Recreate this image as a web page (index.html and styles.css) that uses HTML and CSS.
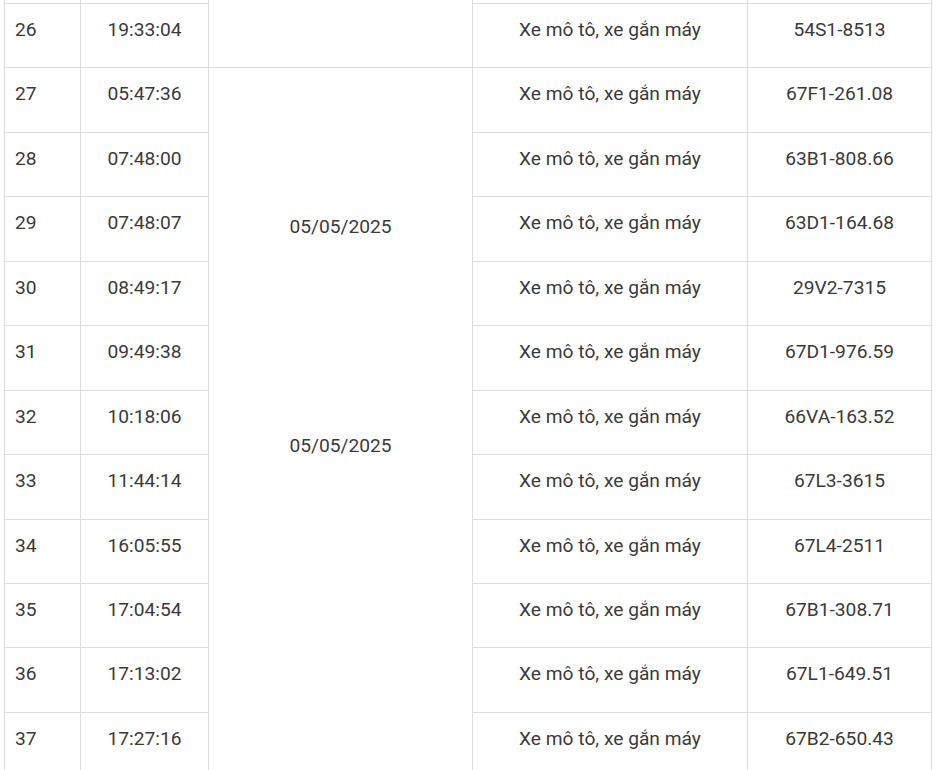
FILE: index.html
```html
<!DOCTYPE html>
<html lang="vi">
<head>
<meta charset="utf-8">
<link rel="stylesheet" href="styles.css">
</head>
<body>
<table class="tbl">
  <colgroup>
    <col class="c-no"><col class="c-time"><col class="c-date"><col class="c-type"><col class="c-plate">
  </colgroup>
  <tbody>
    <tr class="stub">
      <td></td><td></td><td class="date-open" rowspan="2"></td><td></td><td></td>
    </tr>
    <tr>
      <td class="no">26</td><td class="ctr">19:33:04</td><td class="ctr">Xe mô tô, xe gắn máy</td><td class="ctr">54S1-8513</td>
    </tr>
    <tr>
      <td class="no">27</td><td class="ctr">05:47:36</td>
      <td class="date date-a" rowspan="5">05/05/2025</td>
      <td class="ctr">Xe mô tô, xe gắn máy</td><td class="ctr">67F1-261.08</td>
    </tr>
    <tr><td class="no">28</td><td class="ctr">07:48:00</td><td class="ctr">Xe mô tô, xe gắn máy</td><td class="ctr">63B1-808.66</td></tr>
    <tr><td class="no">29</td><td class="ctr">07:48:07</td><td class="ctr">Xe mô tô, xe gắn máy</td><td class="ctr">63D1-164.68</td></tr>
    <tr><td class="no">30</td><td class="ctr">08:49:17</td><td class="ctr">Xe mô tô, xe gắn máy</td><td class="ctr">29V2-7315</td></tr>
    <tr><td class="no">31</td><td class="ctr">09:49:38</td><td class="ctr">Xe mô tô, xe gắn máy</td><td class="ctr">67D1-976.59</td></tr>
    <tr>
      <td class="no">32</td><td class="ctr">10:18:06</td>
      <td class="date date-b" rowspan="6">05/05/2025</td>
      <td class="ctr">Xe mô tô, xe gắn máy</td><td class="ctr">66VA-163.52</td>
    </tr>
    <tr><td class="no">33</td><td class="ctr">11:44:14</td><td class="ctr">Xe mô tô, xe gắn máy</td><td class="ctr">67L3-3615</td></tr>
    <tr><td class="no">34</td><td class="ctr">16:05:55</td><td class="ctr">Xe mô tô, xe gắn máy</td><td class="ctr">67L4-2511</td></tr>
    <tr><td class="no">35</td><td class="ctr">17:04:54</td><td class="ctr">Xe mô tô, xe gắn máy</td><td class="ctr">67B1-308.71</td></tr>
    <tr><td class="no">36</td><td class="ctr">17:13:02</td><td class="ctr">Xe mô tô, xe gắn máy</td><td class="ctr">67L1-649.51</td></tr>
    <tr><td class="no">37</td><td class="ctr">17:27:16</td><td class="ctr">Xe mô tô, xe gắn máy</td><td class="ctr">67B2-650.43</td></tr>
  </tbody>
</table>
</body>
</html>
```
FILE: styles.css
```css
html, body {
  margin: 0;
  padding: 0;
  background: #ffffff;
  overflow: hidden;
}
body {
  padding: 0 4px;
  font-family: Roboto, "Liberation Sans", Arial, sans-serif;
  font-size: 19.2px;
  color: #3a3a3a;
}
.tbl {
  border-collapse: collapse;
  table-layout: fixed;
  width: 928px;
}
.c-no { width: 76px; }
.c-time { width: 128px; }
.c-date { width: 264px; }
.c-type { width: 275px; }
.c-plate { width: 184px; }
.tbl td {
  border: 1px solid #dedede;
  padding: 11px 10px 22.45px 10px;
  line-height: 30px;
  vertical-align: top;
  white-space: nowrap;
}
.tbl tr.stub td {
  border-top: none;
  padding: 0;
  height: 3px;
  line-height: 0;
}
.tbl td.date-open {
  border-top: none;
  border-bottom: none;
  padding: 0;
}
.no { text-align: left; }
.ctr { text-align: center; }
.tbl td.date {
  text-align: center;
}
.tbl td.date-a {
  vertical-align: middle;
  padding-top: 11px;
  padding-bottom: 16px;
  border-bottom: none;
}
.tbl td.date-b {
  vertical-align: top;
  padding-top: 41px;
  border-top: none;
}
```
